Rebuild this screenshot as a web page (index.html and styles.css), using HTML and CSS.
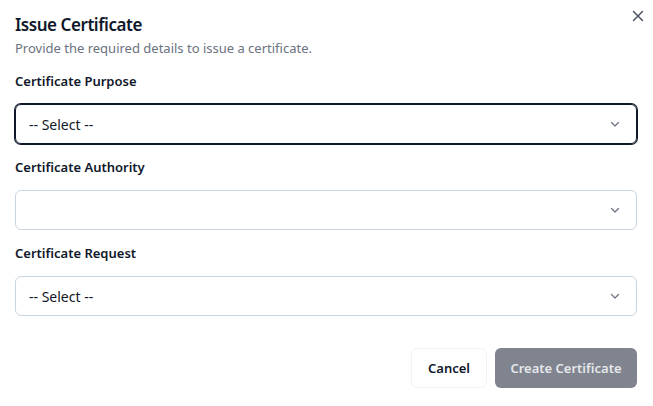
FILE: index.html
```html
<!DOCTYPE html>
<html>
<head>
<meta charset="utf-8">
<link rel="stylesheet" href="styles.css">
</head>
<body>
<div class="dialog">
  <button class="close" aria-label="Close">
    <svg width="12" height="12" viewBox="0 0 12 12"><path d="M1.5 1.5 L10.5 10.5 M10.5 1.5 L1.5 10.5" stroke="#4b5563" stroke-width="1.5" stroke-linecap="round"/></svg>
  </button>
  <header class="head">
    <h2 class="title">Issue Certificate</h2>
    <p class="desc">Provide the required details to issue a certificate.</p>
  </header>
  <div class="fields">
    <div class="field">
      <label class="label">Certificate Purpose</label>
      <div class="select focused"><span class="value">-- Select --</span><svg class="chev" width="12" height="12" viewBox="0 0 12 12"><path d="M2.5 4.5 L6 8 L9.5 4.5" fill="none" stroke="#6b7280" stroke-width="1.2" stroke-linecap="round" stroke-linejoin="round"/></svg></div>
    </div>
    <div class="field">
      <label class="label">Certificate Authority</label>
      <div class="select"><span class="value"></span><svg class="chev" width="12" height="12" viewBox="0 0 12 12"><path d="M2.5 4.5 L6 8 L9.5 4.5" fill="none" stroke="#6b7280" stroke-width="1.2" stroke-linecap="round" stroke-linejoin="round"/></svg></div>
    </div>
    <div class="field">
      <label class="label">Certificate Request</label>
      <div class="select"><span class="value">-- Select --</span><svg class="chev" width="12" height="12" viewBox="0 0 12 12"><path d="M2.5 4.5 L6 8 L9.5 4.5" fill="none" stroke="#6b7280" stroke-width="1.2" stroke-linecap="round" stroke-linejoin="round"/></svg></div>
    </div>
  </div>
  <footer class="actions">
    <button class="btn cancel">Cancel</button>
    <button class="btn primary">Create Certificate</button>
  </footer>
</div>
</body>
</html>
```
FILE: styles.css
```css
* { box-sizing: border-box; }
html, body { margin: 0; padding: 0; background: #fff; }
body {
  font-family: "Noto Sans", "Open Sans", sans-serif;
  color: #0f172a;
  width: 653px;
  height: 406px;
  overflow: hidden;
}
.dialog {
  position: relative;
  padding: 13px 16px 0 15px;
}
.close {
  position: absolute;
  top: 8px;
  right: 7px;
  width: 16px;
  height: 16px;
  padding: 2px;
  border: 0;
  background: transparent;
  display: flex;
  align-items: center;
  justify-content: center;
}
.head { display: flex; flex-direction: column; }
.title {
  margin: 0;
  font-size: 17px;
  line-height: 24px;
  font-weight: 600;
  letter-spacing: -0.45px;
  color: #0f172a;
}
.desc {
  margin: 0;
  font-size: 13px;
  line-height: 22px;
  color: #6b7280;
}
.fields { display: flex; flex-direction: column; }
.field { display: flex; flex-direction: column; gap: 13px; padding-top: 13px; }
.field:first-child { padding-top: 12px; }
.label {
  font-size: 13px;
  line-height: 20px;
  font-weight: 600;
  color: #0f172a;
}
.select {
  height: 40px;
  border: 1px solid #cbd5e1;
  border-radius: 6px;
  display: flex;
  align-items: center;
  justify-content: space-between;
  padding: 0 15px 0 13px;
  font-size: 14px;
  color: #111827;
}
.select.focused {
  border: 1px solid #0f172a;
  box-shadow: 0 0 0 1px #0f172a;
}
.chev { flex: none; }
.actions {
  display: flex;
  justify-content: flex-end;
  gap: 8px;
  margin-top: 32px;
}
.btn {
  height: 40px;
  border-radius: 6px;
  font-family: inherit;
  font-size: 13px;
  font-weight: 600;
  padding: 0;
  white-space: nowrap;
}
.cancel {
  background: #fff;
  border: 1px solid #f1f2f4;
  color: #0f172a;
  width: 76px;
}
.primary {
  background: #80848e;
  border: 0;
  color: #e5e7eb;
  width: 142px;
}
```
